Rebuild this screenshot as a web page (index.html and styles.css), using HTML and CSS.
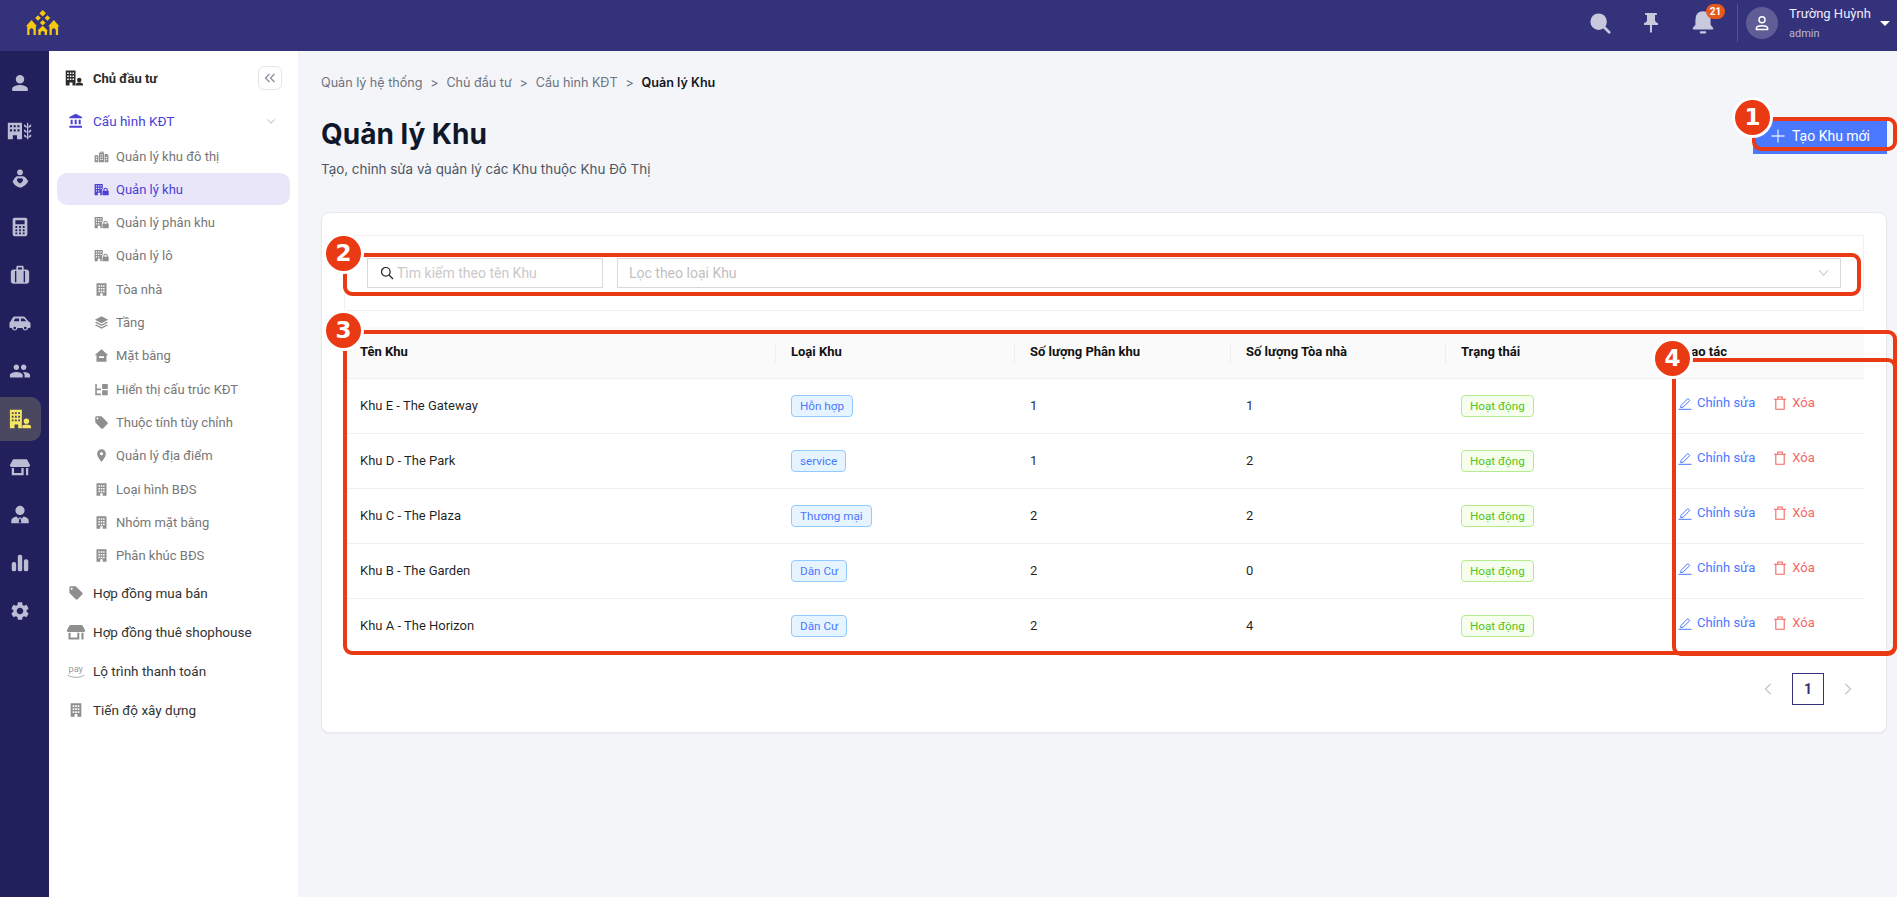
FILE: index.html
```html
<!DOCTYPE html>
<html lang="vi">
<head>
  <meta charset="UTF-8">
  <meta name="viewport" content="width=device-width, initial-scale=1">
  <title>Quản lý Khu</title>
  <link rel="stylesheet" href="styles.css">
</head>
<body>

<!-- icon sheet -->
<svg class="sprite" xmlns="http://www.w3.org/2000/svg">
  <symbol id="i-person" viewBox="0 0 24 24"><path d="M12 12.500c2.600 0 4.600-2.100 4.600-4.600S14.600 3.300 12 3.300 7.400 5.400 7.400 7.900s2 4.600 4.600 4.600zm0 1.800c-3.100 0-8.600 1.500-8.600 4.200v1c0 .7.500 1.200 1.200 1.200h14.800c.7 0 1.200-.5 1.200-1.200v-1c0-2.700-5.500-4.200-8.600-4.200z"/></symbol>
  <symbol id="i-city-tree" viewBox="0 0 30 24"><path fill-rule="evenodd" d="M1 2h17v20h-6v-5H7v5H1zM3.500 5v2.500H6V5zM8 5v2.500h2.500V5zm4.500 0v2.500H15V5zM3.500 10v2.500H6V10zM8 10v2.500h2.500V10zm4.500 0v2.500H15V10z"/><path d="M24 2h1.500v20H24zM20.500 4l3 2v2.500l-3-2zm8.500 0v2.500l-3 2V6zM20.500 10l3 2v2.500l-3-2zm8.500 0v2.500l-3 2V12zM20.500 16l3 2v2.500l-3-2zm8.500 0v2.500l-3 2V18z"/></symbol>
  <symbol id="i-care" viewBox="0 0 24 24"><path fill-rule="evenodd" d="M12 1.500a3.200 3.200 0 1 1 0 6.400 3.200 3.200 0 0 1 0-6.400zM8.500 9h7c2 .6 3.500 2.200 5.500 5.500-2 3.500-4.500 5.500-8 7-4.500-.8-7.500-3-9-6.500 1-2.500 2.500-5 4.500-6zM12 11.800c-1-1-3.300-.5-3.300 1.400 0 1.500 1.800 2.700 3.300 3.800 1.500-1.100 3.300-2.300 3.300-3.800 0-1.900-2.300-2.400-3.300-1.400z"/></symbol>
  <symbol id="i-calc" viewBox="0 0 24 24"><path fill-rule="evenodd" d="M6 2h12c1.100 0 2 .9 2 2v16c0 1.100-.9 2-2 2H6c-1.100 0-2-.9-2-2V4c0-1.100.9-2 2-2zm1 2.500V9h10V4.500zM7 11v2h2v-2zm4 0v2h2v-2zm4 0v2h2v-2zM7 14.500v2h2v-2zm4 0v2h2v-2zm4 0v2h2v-2zM7 18v2h2v-2zm4 0v2h2v-2zm4 0v2h2v-2z"/></symbol>
  <symbol id="i-case" viewBox="0 0 24 24"><path fill-rule="evenodd" d="M8 6V3.500C8 2.700 8.700 2 9.500 2h5c.8 0 1.500.7 1.500 1.500V6h3c1.700 0 3 1.300 3 3v9.500c0 1.700-1.300 3-3 3H5c-1.700 0-3-1.300-3-3V9c0-1.700 1.300-3 3-3zm1.800 0h4.400V3.800H9.800zM6.500 7.500v12.500h1.500V7.500zm9.500 0v12.500h1.500V7.500z"/></symbol>
  <symbol id="i-car" viewBox="0 0 24 24"><path fill-rule="evenodd" d="M6.500 5h9c1 0 1.800.4 2.400 1.200L21 10c1.400.4 2.500 1.400 2.500 2.900V16c0 .8-.7 1.500-1.500 1.500h-1.100a3.200 3.200 0 0 1-6.300 0H9.400a3.200 3.200 0 0 1-6.300 0H2c-.8 0-1.500-.7-1.500-1.500v-3.500c0-1 .5-1.800 1.300-2.300L4 6.300C4.500 5.500 5.500 5 6.500 5zM6.800 7L5 10h6V7zm6.200 0v3h5.800l-2.100-2.500c-.3-.3-.6-.5-1-.5zM6.250 16a1.500 1.500 0 1 0 0 3 1.500 1.500 0 0 0 0-3zm11.500 0a1.500 1.500 0 1 0 0 3 1.500 1.500 0 0 0 0-3z"/></symbol>
  <symbol id="i-people" viewBox="0 0 24 24"><path d="M16 11c1.660 0 2.990-1.340 2.990-3S17.660 5 16 5c-1.660 0-3 1.340-3 3s1.340 3 3 3zm-8 0c1.660 0 2.990-1.340 2.990-3S9.660 5 8 5C6.340 5 5 6.340 5 8s1.340 3 3 3zm0 2c-2.330 0-7 1.170-7 3.500V19h14v-2.500c0-2.330-4.670-3.500-7-3.500zm8 0c-.29 0-.62.02-.97.05 1.160.84 1.970 1.970 1.970 3.450V19h6v-2.500c0-2.330-4.670-3.500-7-3.500z"/></symbol>
  <symbol id="i-owner" viewBox="0 0 24 24"><path fill-rule="evenodd" d="M1 2h13v20h-4v-4H6v4H1zM3 4.500v2h2v-2zm3.500 0v2h2v-2zm3.500 0v2h2v-2zM3 8.500v2h2v-2zm3.500 0v2h2v-2zm3.500 0v2h2v-2zM3 12.500v2h2v-2zm3.500 0v2h2v-2zm3.500 0v2h2v-2z"/><path d="M19 11.500a3 3 0 1 1 0 6 3 3 0 0 1 0-6zM19 18c-2.300 0-4.500.8-4.500 2v2H24v-2c0-1.200-2.700-2-5-2z"/></symbol>
  <symbol id="i-shop" viewBox="0 0 24 24"><path d="M4.500 3.500h15l3.500 6.300c0 1.500-1 2.200-2 2.200H3c-1 0-2-.7-2-2.200zM3 13h2.500v5.500h8V13H16v8H3zM18.500 13H21v8h-2.500z"/></symbol>
  <symbol id="i-agent" viewBox="0 0 24 24"><path fill-rule="evenodd" d="M12 2a5 5 0 1 1 0 10 5 5 0 0 1 0-10zM8.300 13.500l1.700 2.500 1-1.200h2l1 1.200 1.700-2.500c3.200.6 5.800 2 5.800 4.500V21H2.500v-3c0-2.500 2.600-3.900 5.800-4.500zM11.300 16l-.8 4.500h3l-.8-4.500z"/></symbol>
  <symbol id="i-chart" viewBox="0 0 24 24"><rect x="3" y="11" width="4.800" height="10" rx="2"/><rect x="9.600" y="3" width="4.800" height="18" rx="2"/><rect x="16.200" y="8" width="4.800" height="13" rx="2"/></symbol>
  <symbol id="i-gear" viewBox="0 0 24 24"><path d="M19.140 12.940c.04-.3.06-.61.06-.94 0-.32-.02-.64-.07-.94l2.030-1.580c.18-.14.23-.41.12-.61l-1.920-3.320c-.12-.22-.37-.29-.59-.22l-2.390.96c-.5-.38-1.030-.7-1.620-.94l-.36-2.540c-.04-.24-.24-.41-.48-.41h-3.840c-.24 0-.43.17-.47.41l-.36 2.540c-.59.24-1.130.57-1.620.94l-2.390-.96c-.22-.08-.47 0-.59.22L2.740 8.870c-.12.21-.08.47.12.61l2.030 1.580c-.05.3-.09.63-.09.94s.02.64.07.94l-2.030 1.580c-.18.14-.23.41-.12.61l1.920 3.320c.12.22.37.29.59.22l2.390-.96c.5.38 1.030.7 1.620.94l.36 2.540c.05.24.24.41.48.41h3.840c.24 0 .44-.17.47-.41l.36-2.540c.59-.24 1.130-.56 1.620-.94l2.390.96c.22.08.47 0 .59-.22l1.920-3.320c.12-.22.07-.47-.12-.61l-2.010-1.580zM12 15.600c-1.980 0-3.600-1.620-3.600-3.600s1.620-3.600 3.600-3.600 3.600 1.620 3.600 3.600-1.620 3.600-3.600 3.600z"/></symbol>
  <symbol id="i-bank" viewBox="0 0 24 24"><path d="M4 10v7h3v-7H4zm6 0v7h3v-7h-3zM2 22h19v-3H2v3zm14-12v7h3v-7h-3zm-4.500-9L2 6v2h19V6l-9.500-5z"/></symbol>
  <symbol id="i-city" viewBox="0 0 24 24"><path fill-rule="evenodd" d="M1 10h6v11H1zM8 6h2V4h1.500v2h1V4H15v2h1v15H8zM17 8h4l2 2v11h-6zM3 12.500v2h2v-2zm0 3.500v2h2v-2zm7-7.500v2h1.500v-2zm2.500 0v2H14v-2zM10 12v2h1.500v-2zm2.500 0v2H14v-2zM10 15.500v2h1.500v-2zm2.500 0v2H14v-2zM19 12.500v2h2v-2zm0 3.500v2h2v-2z"/></symbol>
  <symbol id="i-lock-b" viewBox="0 0 24 24"><path fill-rule="evenodd" d="M1 3h13v7.500c-1 .8-1.500 2-1.500 3.500v7H10v-4H6v4H1zM3 5v2h2V5zm3.500 0v2h2V5zM10 5v2h2V5zM3 9v2h2V9zm3.500 0v2h2V9zM10 9v2h2V9zM3 13v2h2v-2zm3.500 0v2h2v-2z"/><path fill-rule="evenodd" d="M15 14v-1.500a3.500 3.500 0 0 1 7 0V14h1.500v7H13.500v-7zm1.700 0h3.600v-1.500a1.800 1.800 0 0 0-3.600 0z"/></symbol>
  <symbol id="i-tower" viewBox="0 0 24 24"><path fill-rule="evenodd" d="M4 2h16v20h-6v-4h-4v4H4zM7 5v2.500h2.500V5zm3.800 0v2.500h2.500V5zm3.700 0v2.500H17V5zM7 9.500V12h2.500V9.500zm3.800 0V12h2.500V9.500zm3.700 0V12H17V9.500zM7 14v2.500h2.500V14zm7.500 0v2.500H17V14zm-3.700 0v2.500h2.500V14z"/></symbol>
  <symbol id="i-layers" viewBox="0 0 24 24"><path d="M12 2L1.500 7.500 12 13l10.500-5.500zM3.800 10.800L1.500 12 12 17.500 22.500 12l-2.300-1.200L12 15zM3.800 15.300L1.500 16.500 12 22l10.500-5.500-2.300-1.200L12 19.500z"/></symbol>
  <symbol id="i-house" viewBox="0 0 24 24"><path fill-rule="evenodd" d="M12 2L1 11.500h3V22h16V11.500h3zM8 13h8v3H8z"/></symbol>
  <symbol id="i-tree" viewBox="0 0 24 24"><path d="M2 3h2.500v7.500H11V13H4.500v5.500H11V21H2zM13 3h9v8h-9zM13 13h9v8h-9z"/></symbol>
  <symbol id="i-tag" viewBox="0 0 24 24"><path d="M21.410 11.580l-9-9C12.050 2.220 11.550 2 11 2H4c-1.100 0-2 .9-2 2v7c0 .55.22 1.050.59 1.420l9 9c.36.36.86.58 1.410.58s1.050-.22 1.410-.59l7-7c.37-.36.59-.86.59-1.410s-.23-1.060-.59-1.420zM5.500 7C4.670 7 4 6.330 4 5.500S4.670 4 5.500 4 7 4.670 7 5.500 6.330 7 5.500 7z"/></symbol>
  <symbol id="i-pin" viewBox="0 0 24 24"><path d="M12 2C8.130 2 5 5.130 5 9c0 5.250 7 13 7 13s7-7.750 7-13c0-3.870-3.130-7-7-7zm0 9.500a2.500 2.500 0 0 1 0-5 2.500 2.500 0 0 1 0 5z"/></symbol>
  <symbol id="i-thumb" viewBox="0 0 24 24"><path d="M16 9V4h1c.55 0 1-.45 1-1s-.45-1-1-1H7c-.55 0-1 .45-1 1s.45 1 1 1h1v5c0 1.660-1.340 3-3 3v2h5.970v7l1 1 1-1v-7H19v-2c-1.660 0-3-1.340-3-3z"/></symbol>
  <symbol id="i-edit" viewBox="0 0 14 14"><path d="M3 9.500L9.800 2.500l2 2L5 11.200l-2.400.4zM.5 13.300h13" fill="none" stroke="currentColor" stroke-width="1"/></symbol>
  <symbol id="i-del" viewBox="0 0 14 14"><path d="M2.800 3.500v9.800h8.400V3.500M1 3.300h12M4.800 3.300V1h4.400v2.300" fill="none" stroke="currentColor" stroke-width="1.100"/></symbol>
</svg>

<header class="topbar">
  <svg class="logo" viewBox="0 0 48 36" fill="#f6c90e">
    <path d="M22.700 4l3.300 3.300-3.300 3.300-3.300-3.300zM18 9.200l2.800 2.800-2.800 2.800-2.800-2.800zM27.400 9.200l2.800 2.800-2.800 2.800-2.800-2.800zM22.700 13.900l2.800 2.800-2.800 2.800-2.800-2.800z"/>
    <path fill-rule="evenodd" d="M11.500 14l5.500 6.200h-1.200V29H7.200v-8.800H6zM9.500 29h4v-4.500c0-1.200-.9-2.200-2-2.200s-2 1-2 2.200zM33.800 14l5.500 6.200h-1.200V29h-8.600v-8.800H28.300zM31.800 29h4v-4.500c0-1.200-.9-2.200-2-2.200s-2 1-2 2.200zM22.700 19.800l5.300 4.900h-1V29h-8.600v-4.300h-1zM20.700 29h4v-2.200c0-1-.9-1.800-2-1.800s-2 .8-2 1.800z"/>
  </svg>
  <div class="topbar-right">
    <svg class="top-icon search" viewBox="0 0 24 24" fill="none" stroke="#c9c9de" stroke-width="3"><circle cx="10.500" cy="10.500" r="7.500"/><path d="M16 16l6 6" stroke-linecap="round"/></svg>
    <svg class="top-icon thumb"><use href="#i-thumb"/></svg>
    <div class="bell">
      <svg class="top-icon" viewBox="0 0 24 24" fill="none" stroke="#c9c9de" stroke-width="2"><path d="M12 3c-4 0-6 3-6 7v5l-2.500 3h17L18 15v-5c0-4-2-7-6-7z" stroke-linejoin="round"/><path d="M10 21.500h4" stroke-linecap="round"/></svg>
      <span class="badge">21</span>
    </div>
    <div class="top-divider"></div>
    <div class="avatar">
      <svg viewBox="0 0 24 24" fill="none" stroke="#fff" stroke-width="2"><circle cx="12" cy="7.500" r="4"/><path d="M4.500 20.500v-1.500c0-2 3-3.500 7.500-3.500s7.500 1.500 7.500 3.500v1.500z" stroke-linejoin="round"/></svg>
    </div>
    <div class="user-text">
      <div class="user-name">Trường Huỳnh</div>
      <div class="user-role">admin</div>
    </div>
    <span class="caret"></span>
  </div>
</header>

<div class="shell">
  <nav class="rail">
    <a class="rail-item"><svg><use href="#i-person"/></svg></a>
    <a class="rail-item"><svg class="wide"><use href="#i-city-tree"/></svg></a>
    <a class="rail-item"><svg><use href="#i-care"/></svg></a>
    <a class="rail-item"><svg><use href="#i-calc"/></svg></a>
    <a class="rail-item"><svg><use href="#i-case"/></svg></a>
    <a class="rail-item"><svg><use href="#i-car"/></svg></a>
    <a class="rail-item"><svg><use href="#i-people"/></svg></a>
    <a class="rail-item active"><svg><use href="#i-owner"/></svg></a>
    <a class="rail-item"><svg><use href="#i-shop"/></svg></a>
    <a class="rail-item"><svg><use href="#i-agent"/></svg></a>
    <a class="rail-item"><svg><use href="#i-chart"/></svg></a>
    <a class="rail-item"><svg><use href="#i-gear"/></svg></a>
  </nav>

  <aside class="sidebar">
    <div class="side-head">
      <svg class="side-head-icon"><use href="#i-owner"/></svg>
      <span>Chủ đầu tư</span>
      <button class="collapse">
        <svg viewBox="0 0 12 12" fill="none" stroke="#8c8c9c" stroke-width="1.300"><path d="M5.500 2L1.500 6l4 4M10.500 2l-4 4 4 4"/></svg>
      </button>
    </div>

    <div class="side-parent open">
      <svg class="side-icon"><use href="#i-bank"/></svg>
      <span>Cấu hình KĐT</span>
      <svg class="chev" viewBox="0 0 12 8" fill="none" stroke="#b5b5c0" stroke-width="1.200"><path d="M1.500 1.500L6 6l4.500-4.500"/></svg>
    </div>
    <ul class="side-sub">
      <li><svg><use href="#i-city"/></svg>Quản lý khu đô thị</li>
      <li class="active"><svg><use href="#i-lock-b"/></svg>Quản lý khu</li>
      <li><svg><use href="#i-lock-b"/></svg>Quản lý phân khu</li>
      <li><svg><use href="#i-lock-b"/></svg>Quản lý lô</li>
      <li><svg><use href="#i-tower"/></svg>Tòa nhà</li>
      <li><svg><use href="#i-layers"/></svg>Tầng</li>
      <li><svg><use href="#i-house"/></svg>Mặt bằng</li>
      <li><svg><use href="#i-tree"/></svg>Hiển thị cấu trúc KĐT</li>
      <li><svg><use href="#i-tag"/></svg>Thuộc tính tùy chỉnh</li>
      <li><svg><use href="#i-pin"/></svg>Quản lý địa điểm</li>
      <li><svg><use href="#i-tower"/></svg>Loại hình BĐS</li>
      <li><svg><use href="#i-tower"/></svg>Nhóm mặt bằng</li>
      <li><svg><use href="#i-tower"/></svg>Phân khúc BĐS</li>
    </ul>

    <div class="side-parent first-after">
      <svg class="side-icon"><use href="#i-tag"/></svg>
      <span>Hợp đồng mua bán</span>
    </div>
    <div class="side-parent">
      <svg class="side-icon big"><use href="#i-shop"/></svg>
      <span>Hợp đồng thuê shophouse</span>
    </div>
    <div class="side-parent">
      <svg class="side-icon big" viewBox="0 0 24 24"><text x="3" y="13" class="pay-text">pay</text><path d="M2 17c6 3.500 14 3.500 20 0" fill="none" stroke="#9a9a9a" stroke-width="1"/></svg>
      <span>Lộ trình thanh toán</span>
    </div>
    <div class="side-parent">
      <svg class="side-icon"><use href="#i-tower"/></svg>
      <span>Tiến độ xây dựng</span>
    </div>
  </aside>

  <main class="content">
    <div class="crumbs">
      <span>Quản lý hệ thống</span><i>&gt;</i>
      <span>Chủ đầu tư</span><i>&gt;</i>
      <span>Cấu hình KĐT</span><i>&gt;</i>
      <b>Quản lý Khu</b>
    </div>

    <div class="page-head">
      <div>
        <h1>Quản lý Khu</h1>
        <p>Tạo, chỉnh sửa và quản lý các Khu thuộc Khu Đô Thị</p>
      </div>
      <button class="btn-primary">
        <svg viewBox="0 0 14 14" fill="none" stroke="#dfe6ff" stroke-width="1.300"><path d="M7 .5v13M.5 7h13"/></svg>
        Tạo Khu mới
      </button>
    </div>

    <section class="card">
      <div class="filters">
        <label class="search-box">
          <svg viewBox="0 0 14 14" fill="none" stroke="#222" stroke-width="1.200"><circle cx="5.800" cy="5.800" r="4.300"/><path d="M9 9l4 4"/></svg>
          <input type="text" placeholder="Tìm kiếm theo tên Khu">
        </label>
        <div class="select-box">
          <span>Lọc theo loại Khu</span>
          <svg viewBox="0 0 12 8" fill="none" stroke="#c4c4c4" stroke-width="1.100"><path d="M1 1l5 5.500L11 1"/></svg>
        </div>
      </div>

      <table class="grid">
        <colgroup>
          <col class="c-name"><col class="c-type"><col class="c-sub"><col class="c-tower"><col class="c-state"><col class="c-act">
        </colgroup>
        <thead>
          <tr><th>Tên Khu</th><th>Loại Khu</th><th>Số lượng Phân khu</th><th>Số lượng Tòa nhà</th><th>Trạng thái</th><th>Thao tác</th></tr>
        </thead>
        <tbody>
          <tr>
            <td>Khu E - The Gateway</td><td><span class="tag blue">Hỗn hợp</span></td><td>1</td><td>1</td>
            <td><span class="tag green">Hoạt động</span></td>
            <td><div class="acts"><a class="act-edit"><svg><use href="#i-edit"/></svg>Chỉnh sửa</a><a class="act-del"><svg><use href="#i-del"/></svg>Xóa</a></div></td>
          </tr>
          <tr>
            <td>Khu D - The Park</td><td><span class="tag blue">service</span></td><td>1</td><td>2</td>
            <td><span class="tag green">Hoạt động</span></td>
            <td><div class="acts"><a class="act-edit"><svg><use href="#i-edit"/></svg>Chỉnh sửa</a><a class="act-del"><svg><use href="#i-del"/></svg>Xóa</a></div></td>
          </tr>
          <tr>
            <td>Khu C - The Plaza</td><td><span class="tag blue">Thương mại</span></td><td>2</td><td>2</td>
            <td><span class="tag green">Hoạt động</span></td>
            <td><div class="acts"><a class="act-edit"><svg><use href="#i-edit"/></svg>Chỉnh sửa</a><a class="act-del"><svg><use href="#i-del"/></svg>Xóa</a></div></td>
          </tr>
          <tr>
            <td>Khu B - The Garden</td><td><span class="tag blue">Dân Cư</span></td><td>2</td><td>0</td>
            <td><span class="tag green">Hoạt động</span></td>
            <td><div class="acts"><a class="act-edit"><svg><use href="#i-edit"/></svg>Chỉnh sửa</a><a class="act-del"><svg><use href="#i-del"/></svg>Xóa</a></div></td>
          </tr>
          <tr>
            <td>Khu A - The Horizon</td><td><span class="tag blue">Dân Cư</span></td><td>2</td><td>4</td>
            <td><span class="tag green">Hoạt động</span></td>
            <td><div class="acts"><a class="act-edit"><svg><use href="#i-edit"/></svg>Chỉnh sửa</a><a class="act-del"><svg><use href="#i-del"/></svg>Xóa</a></div></td>
          </tr>
        </tbody>
      </table>

      <div class="pager">
        <svg viewBox="0 0 8 12" fill="none" stroke="#c4c4c4" stroke-width="1.200"><path d="M6.500 1L1.500 6l5 5"/></svg>
        <span class="page-num">1</span>
        <svg viewBox="0 0 8 12" fill="none" stroke="#c4c4c4" stroke-width="1.200"><path d="M1.500 1l5 5-5 5"/></svg>
      </div>
    </section>
  </main>
</div>

<!-- annotation boxes drawn over the screenshot -->
<div class="mark mark-1"><span>1</span></div>
<div class="mark mark-2"><span>2</span></div>
<div class="mark mark-3"><span>3</span></div>
<div class="mark mark-4"><span>4</span></div>

</body>
</html>
```

FILE: styles.css
```css
* { margin: 0; padding: 0; box-sizing: border-box; }
html, body { height: 100%; width: 100%; overflow: hidden; }
body { position: relative; display: flex; flex-direction: column; font-family: 'Roboto', sans-serif; font-size: 14px; color: rgba(0,0,0,0.88); background: #f4f5f8; }
.sprite { position: absolute; width: 0; height: 0; }

/* Top bar */
.topbar { height: 51px; flex: none; background: #35327c; display: flex; align-items: center; justify-content: space-between; padding-left: 20px; }
.logo { width: 48px; height: 36px; margin-top: -3px; }
.topbar-right { display: flex; align-items: center; padding-bottom: 5px; }
.top-icon { display: block; fill: #c9c9de; }
.top-icon.search { width: 22px; height: 22px; margin-right: 28px; margin-top: -1px; }
.top-icon.thumb { width: 24px; height: 24px; margin-right: 27px; margin-top: -1px; }
.bell { position: relative; width: 26px; height: 26px; margin-top: -2px; margin-right: 21px; }
.bell .top-icon { width: 26px; height: 26px; }
.badge { position: absolute; top: -5px; left: 16px; width: 19px; height: 15px; border-radius: 8px; background: #e8591c; color: #fff; font-size: 10px; font-weight: 700; line-height: 15px; text-align: center; }
.top-divider { width: 1px; height: 38px; background: #55528f; margin-right: 8px; }
.avatar { width: 32px; height: 32px; border-radius: 50%; background: #605d96; display: flex; align-items: center; justify-content: center; margin-right: 11px; }
.avatar svg { width: 18px; height: 18px; }
.user-text { width: 91px; }
.user-name { color: #eef; font-size: 13px; line-height: 18px; margin-top: -2px; }
.user-role { color: #b8b8d0; font-size: 11px; line-height: 13px; margin-top: 4px; }
.caret { width: 0; height: 0; border-left: 5px solid transparent; border-right: 5px solid transparent; border-top: 5px solid #fff; margin-right: 7px; }

.shell { flex: 1; display: flex; min-height: 0; }

/* Icon rail */
.rail { width: 49px; flex: none; background: #211f5c; padding-top: 10px; display: flex; flex-direction: column; gap: 4px; }
.rail-item { width: 41px; height: 44px; padding-right: 2px; display: flex; align-items: center; justify-content: center; border-radius: 0 10px 10px 0; }
.rail-item svg { width: 22px; height: 22px; fill: #bcbcd4; }
.rail-item svg.wide { width: 25px; height: 20px; }
.rail-item.active { background: #4a4761; }
.rail-item.active svg { fill: #f5e663; width: 22px; height: 22px; }

/* Sidebar */
.sidebar { width: 249px; flex: none; background: #fff; color: #333; }
.side-head { height: 40px; margin: 7px 16px 3px 16px; display: flex; align-items: center; font-weight: 700; font-size: 13px; color: #2b2b2b; }
.side-head-icon { width: 18px; height: 18px; fill: #2b2b2b; margin-right: 10px; }
.collapse { width: 24px; height: 24px; margin-left: auto; background: #fff; border: 1px solid #e6e6e6; border-radius: 6px; display: flex; align-items: center; justify-content: center; }
.collapse svg { width: 12px; height: 12px; }

.side-parent { height: 39px; display: flex; align-items: center; padding-left: 19px; font-size: 13.5px; color: #333; position: relative; }
.side-parent.open { color: #4b3fd6; }
.side-parent.first-after { margin-top: 2px; }
.side-icon { width: 16px; height: 16px; fill: #8f8f8f; margin-right: 9px; flex: none; }
.side-icon.big { width: 20px; height: 20px; margin-left: -2px; margin-right: 7px; }
.open .side-icon { fill: #4b3fd6; }
.chev { position: absolute; right: 22px; top: 17px; width: 10px; height: 7px; }
.pay-text { font-family: 'Roboto', sans-serif; font-size: 11px; fill: #9a9a9a; }

.side-sub { list-style: none; display: flex; flex-direction: column; gap: 1.33px; }
.side-sub li { height: 32px; margin: 0 8px; padding-left: 37px; display: flex; align-items: center; font-size: 13px; color: #777; border-radius: 10px; }
.side-sub li svg { width: 15px; height: 15px; fill: #8f8f8f; margin-right: 7px; flex: none; }
.side-sub li.active { background: #e8e6f8; color: #4b3fd6; }
.side-sub li.active svg { fill: #4b3fd6; }

/* Main */
.content { flex: 1; min-width: 0; padding: 22px 10px 0 23px; }
.crumbs { height: 20px; line-height: 20px; margin-bottom: 23px; font-family: 'Inter', sans-serif; font-size: 12.6px; color: #6b7280; display: flex; }
.crumbs i { font-style: normal; margin: 0 7.8px; }
.crumbs b { font-weight: 600; color: #111827; }
.page-head { display: flex; justify-content: space-between; align-items: flex-start; margin-bottom: 33px; }
.page-head h1 { font-family: 'Inter', sans-serif; font-size: 28px; font-weight: 700; line-height: 36px; color: #0f172a; margin-bottom: 7px; }
.page-head p { font-family: 'Inter', sans-serif; font-size: 13.4px; line-height: 20px; color: #4b5563; }
.btn-primary { width: 134px; height: 37px; margin-top: 1px; background: #4a78ff; color: #fff; border: none; font-family: 'Roboto', sans-serif; font-size: 14px; display: flex; align-items: center; padding-left: 18px; gap: 7px; }
.btn-primary svg { width: 14px; height: 14px; }

.card { background: #fff; border: 1px solid #e6e8ee; border-radius: 8px; padding: 22px 22px 27px; box-shadow: 0 1px 2px rgba(0,0,0,0.04); }

.filters { height: 76px; border: 1px solid #f0f0f0; padding: 22px; display: flex; gap: 14px; margin-bottom: 16px; }
.search-box { width: 236px; height: 30px; border: 1px solid #d9d9d9; display: flex; align-items: center; padding: 0 0 1px 12px; gap: 3px; }
.search-box svg { width: 14px; height: 14px; flex: none; }
.search-box input { flex: 1; min-width: 0; border: none; outline: none; background: none; font-family: 'Roboto', sans-serif; font-size: 14px; }
.search-box input::placeholder { color: #c9c9c9; }
.select-box { flex: 1; height: 30px; border: 1px solid #d9d9d9; display: flex; align-items: center; justify-content: space-between; padding: 0 11px 1px; font-size: 14px; color: #bfbfbf; }
.select-box svg { width: 11px; height: 8px; }

.grid { width: 100%; border-collapse: collapse; table-layout: fixed; font-size: 13px; }
.c-name { width: 431px; } .c-type { width: 239px; } .c-sub { width: 216px; } .c-tower { width: 215px; } .c-state { width: 215px; } .c-act { width: 204px; }
.grid th { height: 51px; background: #fafafa; border-bottom: 1px solid #f0f0f0; text-align: left; font-weight: 700; padding: 0 16px 1px; position: relative; color: #111; }
.grid th + th::before { content: ''; position: absolute; left: 0; top: 16px; height: 20px; width: 1px; background: #eee; }
.grid td { height: 55px; border-bottom: 1px solid #f0f0f0; padding: 0 16px; line-height: 22px; }
.grid tr:last-child td { border-bottom: none; }
.tag { display: inline-block; height: 22px; line-height: 20px; padding: 0 8px; border: 1px solid; border-radius: 4px; font-size: 11.7px; vertical-align: top; }
.tag.blue { background: #e6f4ff; border-color: #91caff; color: #4a78ff; }
.tag.green { background: #f6ffed; border-color: #b7eb8f; color: #52c41a; }

.acts { display: flex; gap: 18px; margin-top: -6px; margin-left: 2px; }
.acts a { display: flex; align-items: center; gap: 5px; font-size: 13px; }
.acts svg { width: 14px; height: 14px; }
.act-edit { color: #4a78ff; }
.act-del { color: #f5655f; }

.pager { margin-top: 20px; display: flex; justify-content: flex-end; align-items: center; padding-right: 12px; }
.pager svg { width: 8px; height: 12px; }
.page-num { width: 32px; height: 32px; margin: 0 20px; border: 1px solid #35327c; color: #35327c; font-weight: 700; display: flex; align-items: center; justify-content: center; }

/* Annotations */
.mark { position: absolute; border: 4px solid #ea3a14; border-radius: 9px; }
.mark span { position: absolute; left: -21px; top: -21px; width: 35px; height: 35px; border-radius: 50%; background: #ea3a14; box-shadow: 0 0 0 3px #fff; color: #fff; font-family: 'DejaVu Sans', sans-serif; font-weight: 700; font-size: 23px; line-height: 35px; text-align: center; }
.mark-1 { left: 1752px; top: 117px; width: 145px; height: 34px; }
.mark-2 { left: 343px; top: 253px; width: 1518px; height: 43px; }
.mark-3 { left: 343px; top: 330px; width: 1554px; height: 325px; }
.mark-4 { left: 1672px; top: 358px; width: 225px; height: 298px; }
```
